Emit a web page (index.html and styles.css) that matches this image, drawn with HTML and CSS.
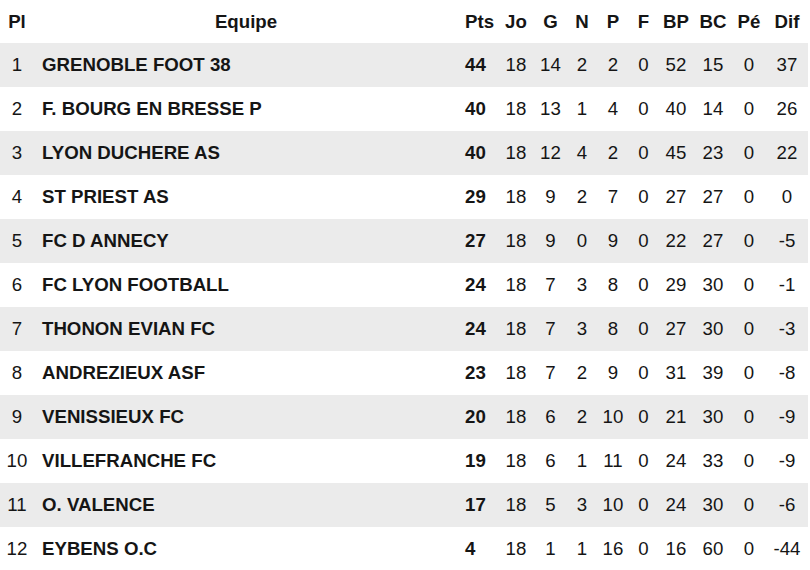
FILE: index.html
```html
<!DOCTYPE html>
<html lang="fr">
<head>
<meta charset="utf-8">
<title>Classement</title>
<link rel="stylesheet" href="styles.css">
</head>
<body>
<table class="standings">
  <colgroup>
    <col class="c-pl"><col class="c-team"><col class="c-pts"><col class="c-jo"><col class="c-g"><col class="c-n"><col class="c-p"><col class="c-f"><col class="c-bp"><col class="c-bc"><col class="c-pe"><col class="c-dif">
  </colgroup>
  <thead>
    <tr><th>Pl</th><th>Equipe</th><th class="pts">Pts</th><th>Jo</th><th>G</th><th>N</th><th>P</th><th>F</th><th>BP</th><th>BC</th><th>Pé</th><th>Dif</th></tr>
  </thead>
  <tbody>
    <tr><td>1</td><td class="team">GRENOBLE FOOT 38</td><td class="pts">44</td><td>18</td><td>14</td><td>2</td><td>2</td><td>0</td><td>52</td><td>15</td><td>0</td><td>37</td></tr>
    <tr><td>2</td><td class="team">F. BOURG EN BRESSE P</td><td class="pts">40</td><td>18</td><td>13</td><td>1</td><td>4</td><td>0</td><td>40</td><td>14</td><td>0</td><td>26</td></tr>
    <tr><td>3</td><td class="team">LYON DUCHERE AS</td><td class="pts">40</td><td>18</td><td>12</td><td>4</td><td>2</td><td>0</td><td>45</td><td>23</td><td>0</td><td>22</td></tr>
    <tr><td>4</td><td class="team">ST PRIEST AS</td><td class="pts">29</td><td>18</td><td>9</td><td>2</td><td>7</td><td>0</td><td>27</td><td>27</td><td>0</td><td>0</td></tr>
    <tr><td>5</td><td class="team">FC D ANNECY</td><td class="pts">27</td><td>18</td><td>9</td><td>0</td><td>9</td><td>0</td><td>22</td><td>27</td><td>0</td><td>-5</td></tr>
    <tr><td>6</td><td class="team">FC LYON FOOTBALL</td><td class="pts">24</td><td>18</td><td>7</td><td>3</td><td>8</td><td>0</td><td>29</td><td>30</td><td>0</td><td>-1</td></tr>
    <tr><td>7</td><td class="team">THONON EVIAN FC</td><td class="pts">24</td><td>18</td><td>7</td><td>3</td><td>8</td><td>0</td><td>27</td><td>30</td><td>0</td><td>-3</td></tr>
    <tr><td>8</td><td class="team">ANDREZIEUX ASF</td><td class="pts">23</td><td>18</td><td>7</td><td>2</td><td>9</td><td>0</td><td>31</td><td>39</td><td>0</td><td>-8</td></tr>
    <tr><td>9</td><td class="team">VENISSIEUX FC</td><td class="pts">20</td><td>18</td><td>6</td><td>2</td><td>10</td><td>0</td><td>21</td><td>30</td><td>0</td><td>-9</td></tr>
    <tr><td>10</td><td class="team">VILLEFRANCHE FC</td><td class="pts">19</td><td>18</td><td>6</td><td>1</td><td>11</td><td>0</td><td>24</td><td>33</td><td>0</td><td>-9</td></tr>
    <tr><td>11</td><td class="team">O. VALENCE</td><td class="pts">17</td><td>18</td><td>5</td><td>3</td><td>10</td><td>0</td><td>24</td><td>30</td><td>0</td><td>-6</td></tr>
    <tr><td>12</td><td class="team">EYBENS O.C</td><td class="pts">4</td><td>18</td><td>1</td><td>1</td><td>16</td><td>0</td><td>16</td><td>60</td><td>0</td><td>-44</td></tr>
  </tbody>
</table>
</body>
</html>
```
FILE: styles.css
```css
html, body {
  margin: 0;
  padding: 0;
  background: #ffffff;
}

body {
  font-family: "Liberation Sans", Arial, sans-serif;
  font-size: 18.67px;
  color: #151515;
}

.standings {
  width: 808px;
  table-layout: fixed;
  border-collapse: collapse;
  border-spacing: 0;
}

.c-pl { width: 34px; }
.c-team { width: 424px; }
.c-pts { width: 40px; }
.c-jo { width: 36px; }
.c-g { width: 33px; }
.c-n { width: 30px; }
.c-p { width: 32px; }
.c-f { width: 29px; }
.c-bp { width: 36px; }
.c-bc { width: 38px; }
.c-pe { width: 34px; }
.c-dif { width: 42px; }

.standings th,
.standings td {
  padding: 0;
  text-align: center;
  vertical-align: middle;
  white-space: nowrap;
  line-height: 22px;
}

.standings th {
  height: 43px;
  font-weight: bold;
}

.standings td {
  height: 44px;
}

.standings tbody tr:nth-child(odd) {
  background: #ebebeb;
}

.standings td.team {
  text-align: left;
  padding-left: 8px;
  font-weight: bold;
}

.standings .pts {
  text-align: left;
  padding-left: 7px;
  font-weight: bold;
}
```
